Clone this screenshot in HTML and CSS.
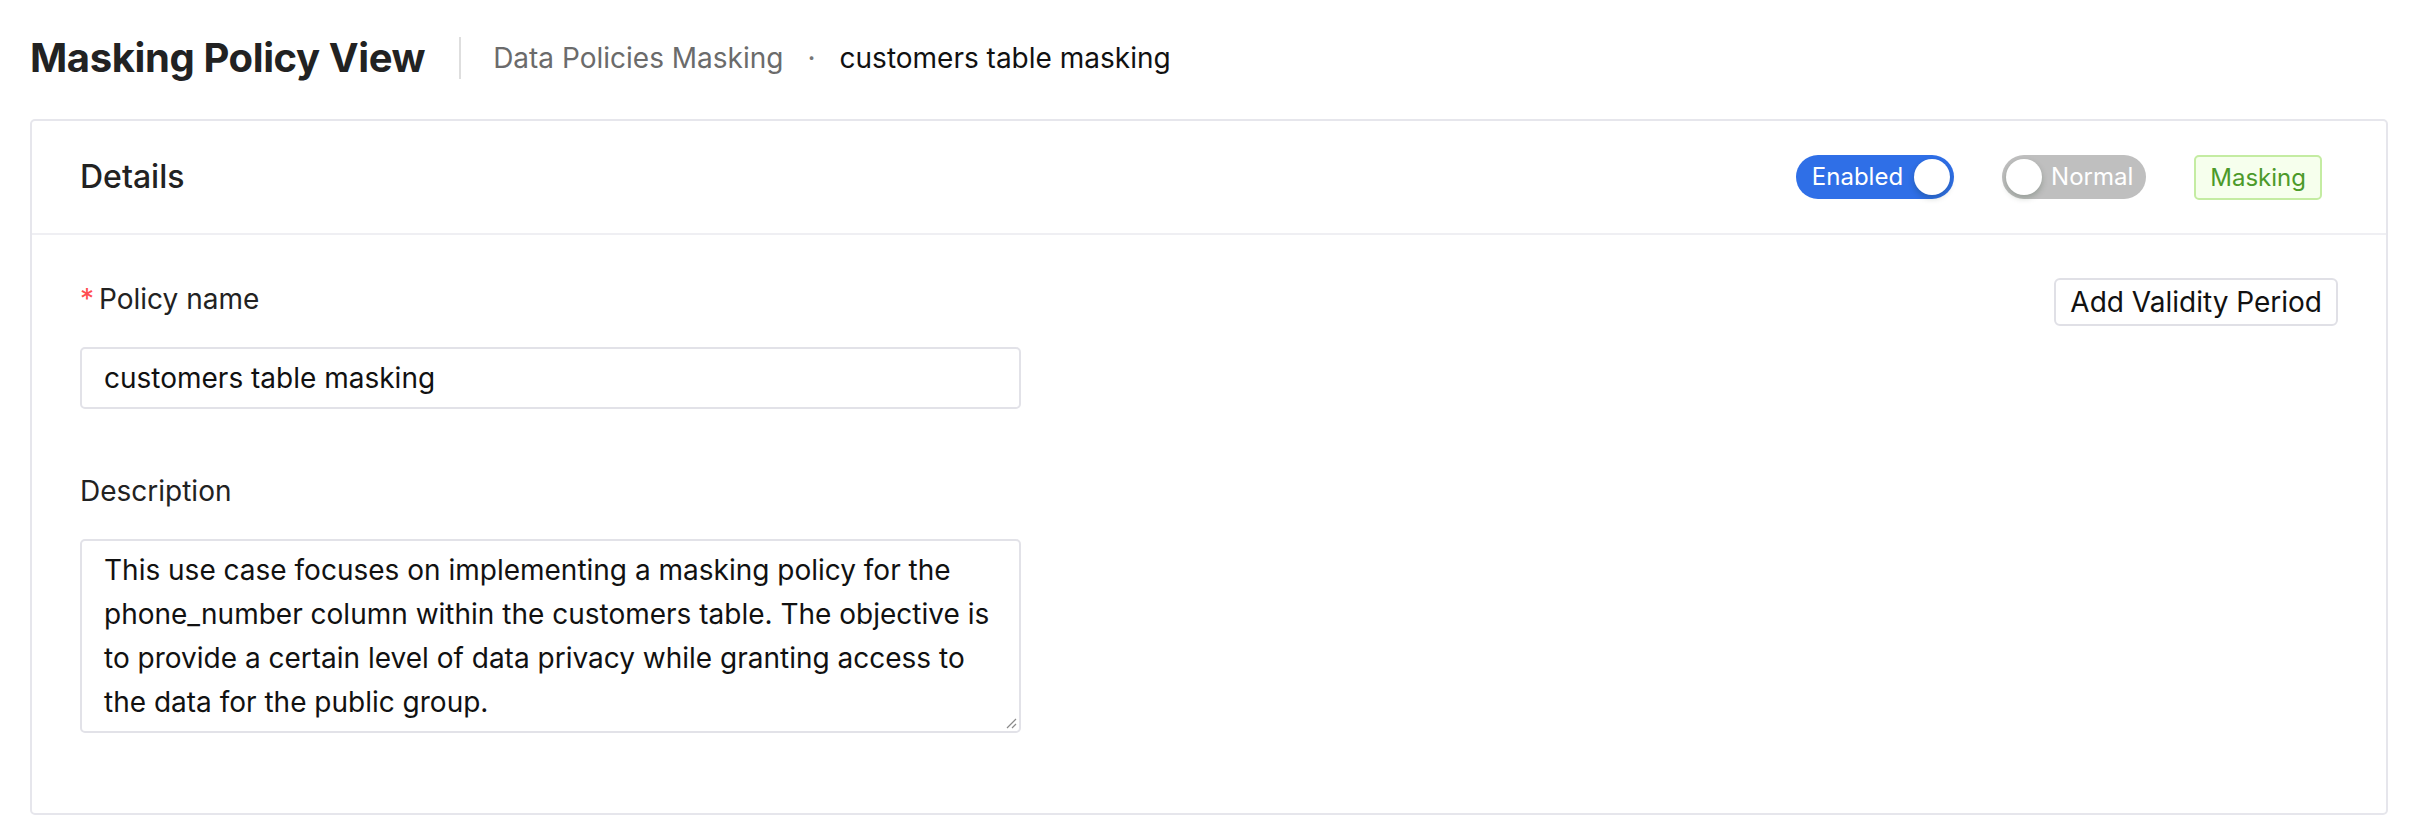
FILE: index.html
```html
<!DOCTYPE html>
<html lang="en">
<head>
<meta charset="utf-8">
<title>Masking Policy View</title>
<link rel="stylesheet" href="styles.css">
</head>
<body>
  <header class="page-header">
    <h1 class="page-title">Masking Policy View</h1>
    <span class="title-divider"></span>
    <nav class="crumbs">
      <span class="crumb crumb-link">Data Policies Masking</span>
      <span class="crumb-sep">·</span>
      <span class="crumb crumb-current">customers table masking</span>
    </nav>
  </header>

  <section class="card">
    <div class="card-head">
      <div class="card-title">Details</div>
      <div class="card-extra">
        <span class="switch switch-on">
          <span class="switch-text">Enabled</span>
          <span class="switch-knob"></span>
        </span>
        <span class="switch switch-off">
          <span class="switch-knob"></span>
          <span class="switch-text">Normal</span>
        </span>
        <span class="tag tag-green">Masking</span>
      </div>
    </div>
    <div class="card-body">
      <div class="form">
        <div class="form-item">
          <div class="form-label"><span class="req">*</span>Policy name</div>
          <div class="input">customers table masking</div>
        </div>
        <div class="form-item form-item-desc">
          <div class="form-label">Description</div>
          <div class="textarea">This use case focuses on implementing a masking policy for the phone_number column within the customers table. The objective is to provide a certain level of data privacy while granting access to the data for the public group.<svg class="grip" width="12" height="12" viewBox="0 0 12 12"><path d="M11 2 L2 11 M11 7 L7 11" stroke="#8a8a8a" stroke-width="1.2" fill="none"/></svg></div>
        </div>
      </div>
      <button class="btn-small" type="button">Add Validity Period</button>
    </div>
  </section>
</body>
</html>
```

FILE: styles.css
```css
* { box-sizing: border-box; }

body {
  margin: 0;
  padding: 16px 32px 0 30px;
  background: #ffffff;
  font-family: Inter, "Noto Sans", "Liberation Sans", sans-serif;
  color: #1f1f1f;
}

.page-header {
  display: flex;
  align-items: center;
  height: 84px;
}

.page-title {
  margin: 0;
  font-size: 40px;
  line-height: 56px;
  font-weight: 700;
  color: #222222;
  letter-spacing: -0.4px;
}

.title-divider {
  width: 2px;
  height: 42px;
  background: #dedede;
  margin: 0 32px 0 34px;
}

.crumbs {
  display: flex;
  align-items: center;
  font-size: 28px;
  line-height: 44px;
}

.crumb-link { color: #6b6b6b; }
.crumb-sep { color: #777777; margin: 0 24px 0 24px; }
.crumb-current { color: #111111; }

.card {
  margin-top: 19px;
  border: 2px solid #e6e6ec;
  border-radius: 5px;
  background: #ffffff;
}

.card-head {
  display: flex;
  align-items: center;
  justify-content: space-between;
  height: 114px;
  padding: 0 48px;
  border-bottom: 2px solid #efeff3;
}

.card-title {
  font-size: 32px;
  line-height: 44px;
  font-weight: 500;
  color: #222222;
}

.card-extra {
  display: flex;
  align-items: center;
}

.switch {
  position: relative;
  display: inline-flex;
  align-items: center;
  height: 44px;
  border-radius: 22px;
  font-size: 24px;
  line-height: 44px;
  color: #ffffff;
}

.switch-on {
  background: #2f6fe7;
  padding: 0 4px 0 16px;
}
.switch-on .switch-text { margin-right: 11px; }

.switch-off {
  background: #bfbfbf;
  padding: 0 13px 0 4px;
  margin-left: 48px;
}
.switch-off .switch-text { margin-left: 9px; }

.switch-knob {
  width: 36px;
  height: 36px;
  border-radius: 50%;
  background: #ffffff;
  box-shadow: 0 3px 6px rgba(0, 35, 11, 0.22);
  flex: none;
}

.tag {
  display: inline-block;
  height: 45px;
  line-height: 41px;
  padding: 0 14px;
  font-size: 24px;
  border-radius: 5px;
  margin-left: 48px;
  margin-right: 16px;
}

.tag-green {
  color: #4c9a2a;
  background: #f6ffed;
  border: 2px solid #c4eca2;
}

.card-body {
  display: flex;
  justify-content: space-between;
  align-items: flex-start;
  padding: 42px 48px 80px 48px;
}

.form {
  width: 941px;
}

.form-label {
  font-size: 28px;
  line-height: 44px;
  color: #222222;
  margin-bottom: 26px;
}

.req {
  color: #ff4d4f;
  margin-right: 5px;
}

.form-item-desc { margin-top: 60px; }

.input,
.textarea {
  border: 2px solid #e2e2e8;
  border-radius: 5px;
  padding: 7px 22px;
  font-size: 28px;
  line-height: 44px;
  color: #111111;
  background: #ffffff;
}

.input { height: 62px; }

.textarea {
  position: relative;
  height: 194px;
}

.grip {
  position: absolute;
  right: 2px;
  bottom: 2px;
}

.btn-small {
  margin-top: 1px;
  height: 48px;
  padding: 0 14px;
  border: 2px solid #e0e0e6;
  border-radius: 6px;
  background: #ffffff;
  font-family: inherit;
  font-size: 28px;
  line-height: 44px;
  color: #111111;
  cursor: pointer;
}
```
